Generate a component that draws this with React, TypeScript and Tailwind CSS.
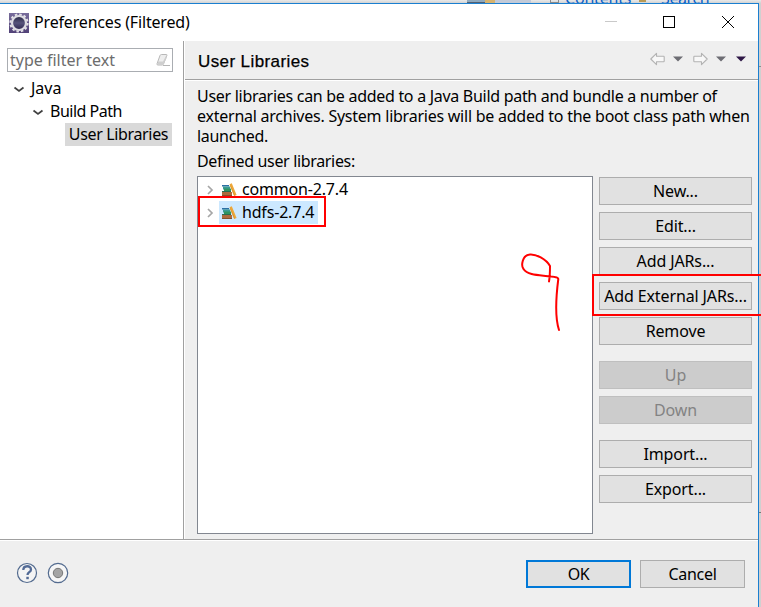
import React from "react";

function PushButton({ label, className = "", disabled = false }: { label: string; className?: string; disabled?: boolean }) {
  const look = disabled ? "border-[#bfbfbf] bg-[#cccccc] text-[#838383]" : "border-[#adadad] bg-[#e1e1e1] text-black";
  return (
    <button className={`flex h-7 w-[153px] shrink-0 items-center justify-center whitespace-nowrap border ${look} ${className}`}>
      {label}
    </button>
  );
}

function Books() {
  return (
    <svg width="16" height="16" viewBox="0 0 16 16" className="shrink-0">
      <path d="M1 3h7v1.500H1z" fill="#2d6fa5" />
      <path d="M2 4.500h7v3H2z" fill="#3a9a94" />
      <path d="M3 6.500h7v3H3z" fill="#2f9460" />
      <path d="M1 9h9v1H1z" fill="#2b6b50" />
      <path d="M1 10h10v4H1z" fill="#ad6a3c" />
      <path d="M1 13h10v1H1z" fill="#85502c" />
      <path d="M8.500 2.200l2.300-1L15.600 13l-2.500 1z" fill="#eda83a" />
      <path d="M9.300 3.500L13.500 13.400" stroke="#d68b2a" strokeWidth=".7" />
    </svg>
  );
}

function Chevron({ open = false }: { open?: boolean }) {
  return (
    <svg width="12" height="12" viewBox="0 0 12 12" fill="none" className="shrink-0">
      {open ? (
        <path d="M1.500 4.500l4.500 3.500L10.500 4.500" stroke="#404040" strokeWidth="1.700" />
      ) : (
        <path d="M4 2l4 4-4 4" stroke="#a6a6a6" strokeWidth="1.700" />
      )}
    </svg>
  );
}

function Gear() {
  return (
    <svg width="20" height="20" viewBox="0 0 20 20" className="shrink-0">
      <defs>
        <linearGradient id="gearBg" x2="0" y2="1">
          <stop stopColor="#776c9b" />
          <stop offset="1" stopColor="#514177" />
        </linearGradient>
        <linearGradient id="gearCore" x2="0" y2="1">
          <stop stopColor="#252440" />
          <stop offset=".5" stopColor="#57547b" />
          <stop offset="1" stopColor="#2c254d" />
        </linearGradient>
      </defs>
      <path d="M0 0h20v20H0z" fill="url(#gearBg)" />
      <circle cx="10" cy="10" r="8.600" fill="none" stroke="#e6e4e8" strokeWidth="2" strokeDasharray="2.5 2" />
      <circle cx="10" cy="10" r="7" fill="url(#gearCore)" stroke="#dedde2" strokeWidth="2.200" />
    </svg>
  );
}

function Caret({ color }: { color: string }) {
  return (
    <svg width="10" height="6" viewBox="0 0 10 6" className="shrink-0">
      <path d="M0 .5h10L5 5.500z" fill={color} />
    </svg>
  );
}

function Arrow({ flip = false }: { flip?: boolean }) {
  return (
    <svg width="15" height="14" viewBox="0 0 15 14" className={flip ? "shrink-0 -scale-x-100" : "shrink-0"}>
      <path d="M.8 7L6.500 1.300v2.900h7q.7 0 .7.7v4.200q0 .7-.7.7h-7v2.900z" fill="#f8f8f8" stroke="#b3b3b3" strokeWidth="1.100" strokeLinejoin="round" />
    </svg>
  );
}

function BackgroundStrip() {
  return (
    <div className="relative h-[3px] shrink-0 overflow-hidden bg-[linear-gradient(#e9e9e9,#d3d3d3)]">
      <div className="absolute left-[467px] top-0 flex h-[3px] w-[68px]">
        <span className="w-[18px] border-b border-[#536072] bg-[#8fa9bd]" />
        <span className="w-[10px] bg-[#d7b36e]" />
        <span className="w-[36px] bg-[#c2cad8]" />
      </div>
      <span className="absolute left-[550px] top-0 h-[3px] w-[9px] border border-t-0 border-[#8b8b8b]" />
      <span className="absolute left-[565px] -top-[10px] text-[16px] leading-[16px] tracking-[-0.2px] text-[#0b60c6]">Contents</span>
      <span className="absolute left-[639px] top-0 h-[2px] w-[7px] bg-[#b89a55]" />
      <span className="absolute left-[661px] -top-[10px] text-[16px] leading-[16px] tracking-[-0.4px] text-[#0b60c6]">Search</span>
    </div>
  );
}

export default function App() {
  return (
    <div className="relative flex h-[607px] w-[761px] flex-col overflow-hidden bg-[#d0d0d0] font-['Noto_Sans','Open_Sans',sans-serif] text-[16px] leading-5 text-black">
      <BackgroundStrip />
      <div className="flex min-h-0 flex-1">
        <div className="flex w-[759px] flex-col border-r border-t border-[#1a7fd0] bg-[#efefef]">
          <header className="flex h-[37px] shrink-0 items-center bg-white pl-[9px]">
            <Gear />
            <span className="-mt-px ml-[5px] whitespace-nowrap tracking-[-0.17px]">Preferences (Filtered)</span>
            <svg width="150" height="20" viewBox="0 0 150 20" className="-mt-px ml-auto mr-[3px]" fill="none" shapeRendering="crispEdges">
              <path d="M0 9.500h12" stroke="#c9c9c9" />
              <path d="M58.500 4.500h11v11h-11z" stroke="#000" />
              <path d="M117 4l12 12M129 4l-12 12" stroke="#000" />
            </svg>
          </header>
          <div className="flex h-[498px] shrink-0">
            <aside className="flex w-[184px] shrink-0 flex-col border-r border-[#a0a0a0] bg-white">
              <div className="ml-[7px] mt-[7px] flex h-6 w-[166px] items-center border border-[#aaadb2] pl-[2px] pr-[1px] text-[#6d6d6d]">
                <span className="whitespace-nowrap">type filter text</span>
                <svg width="16" height="16" viewBox="0 0 16 16" className="ml-auto" fill="none">
                  <path d="M6.500 2.500h4.800q1 0 .6 1L8.500 12q-.4 1-1.400 1H3q-1.400 0-1-1.200L5 3.500q.4-1 1.500-1z" fill="#eee" stroke="#b8b8b8" />
                  <path d="M3 9.500h5L11.500 3v3L8 13H2.500z" fill="#cfcfcf" />
                  <path d="M8 13.500h7" stroke="#b5b5b5" />
                </svg>
              </div>
              <div className="mt-[5px] flex h-[23px] items-center pl-[13px]"><Chevron open /><span className="-mt-[2px] ml-[6px]">Java</span></div>
              <div className="flex h-[23px] items-center pl-[32px]"><Chevron open /><span className="-mt-[2px] ml-[6px] tracking-[-0.5px]">Build Path</span></div>
              <div className="ml-[65px] flex h-[23px] w-[107px] items-center justify-center whitespace-nowrap bg-[#d9d9d9] pb-[2px] tracking-[-0.35px]">User Libraries</div>
            </aside>
            <main className="flex min-w-0 flex-1 flex-col border-l border-white">
              <div className="flex h-[39px] shrink-0 items-center border-b border-[#a0a0a0] pl-[13px]">
                <h1 className="mt-[3px] whitespace-nowrap font-['Liberation_Sans',sans-serif] text-[17px] tracking-[0.4px] [-webkit-text-stroke:0.25px_black]">User Libraries</h1>
                <div className="-mt-[2px] ml-auto mr-[12px] flex items-center">
                  <Arrow />
                  <span className="ml-[8px]"><Caret color="#6d6d73" /></span>
                  <span className="ml-[10px]"><Arrow flip /></span>
                  <span className="ml-[8px]"><Caret color="#6d6d73" /></span>
                  <span className="ml-[10px]"><Caret color="#2e1746" /></span>
                </div>
              </div>
              <div className="flex flex-1 flex-col border-t border-white pl-[12px] pt-[5px]">
                <p className="h-[60px] whitespace-nowrap tracking-[-0.29px]">
                  User libraries can be added to a Java Build path and bundle a number of<br />
                  <span className="tracking-[-0.24px]">external archives. System libraries will be added to the boot class path when</span><br />
                  launched.
                </p>
                <p className="mt-[5px] tracking-[-0.34px]">Defined user libraries:</p>
                <div className="mt-[5px] flex">
                  <div className="h-[358px] w-[396px] shrink-0 border border-[#828790] bg-white pt-[1px] tracking-[-0.18px]">
                    <div className="flex h-[23px] items-center pl-[6px]"><Chevron /><span className="flex h-full items-center pl-[5px]"><Books /><span className="-mt-[2px] ml-[5px]">common-2.7.4</span></span></div>
                    <div className="flex h-[23px] items-center pl-[6px]"><Chevron /><span className="ml-[3px] flex h-full w-[99px] items-center bg-[#cce8ff] pl-[2px]"><Books /><span className="-mt-[2px] ml-[5px] whitespace-nowrap">hdfs-2.7.4</span></span></div>
                  </div>
                  <div className="ml-[6px] mt-[1px] flex flex-col gap-[7px] tracking-[-0.12px]">
                    <PushButton label="New..." />
                    <PushButton label="Edit..." />
                    <PushButton label="Add JARs..." />
                    <PushButton label="Add External JARs..." />
                    <PushButton label="Remove" />
                    <PushButton label="Up" disabled className="mt-[9px]" />
                    <PushButton label="Down" disabled />
                    <PushButton label="Import..." className="mt-[9px]" />
                    <PushButton label="Export..." />
                  </div>
                </div>
              </div>
            </main>
          </div>
          <footer className="flex flex-1 border-t border-[#a0a0a0]">
            <div className="flex flex-1 items-start border-t border-white pl-[16px] pt-[19px]">
              <svg width="54" height="24" viewBox="0 0 54 24" fill="none" className="mt-[2px]">
                <circle cx="11" cy="11" r="9.500" fill="#f4f4f4" stroke="#536b8f" strokeWidth="1.200" />
                <path d="M7.300 8.100c0-5 7.700-5 7.700-.7 0 2.800-3.500 2.700-3.500 5.500" stroke="#536b96" strokeWidth="2.300" />
                <path d="M10.300 14.800h2.500v2.400h-2.500z" fill="#536b96" />
                <circle cx="42" cy="11" r="9.700" fill="#f6f6f6" stroke="#536b8f" strokeWidth="1.200" />
                <circle cx="42" cy="11" r="4.700" fill="#a4a4a4" stroke="#777" />
              </svg>
              <button className="ml-auto flex h-7 w-[105px] items-center justify-center border-2 border-[#0078d7] bg-[#e1e1e1] tracking-[-0.5px]">OK</button>
              <button className="ml-[9px] mr-[13px] flex h-7 w-[105px] items-center justify-center border border-[#adadad] bg-[#e1e1e1] tracking-[-0.3px]">Cancel</button>
            </div>
          </footer>
        </div>
        <div className="flex w-[2px] flex-col bg-[#d0d0d0]">
          <span className="mt-[63px] h-px bg-[#8c8c8c]" />
          <span className="mt-[445px] h-px bg-[#777]" />
        </div>
      </div>

      <div className="absolute left-[198px] top-[196px] h-[31px] w-[128px] border-2 border-[#ff0000]" />
      <div className="absolute left-[592px] top-[274px] h-[42px] w-[180px] border-2 border-[#ff0000]" />
      <svg className="absolute left-[500px] top-[240px]" width="80" height="100" viewBox="0 0 80 100" fill="none">
        <path d="M49 41.500Q50 36 50 26C46 19 36 14 30 14.500C22 15 21 26 23.500 29C28 36 41 35 51 36.500Q58 37 58.300 39C56 57 55 78 59 90" stroke="#ff0000" strokeWidth="2" strokeLinecap="round" strokeLinejoin="round" />
      </svg>
    </div>
  );
}
